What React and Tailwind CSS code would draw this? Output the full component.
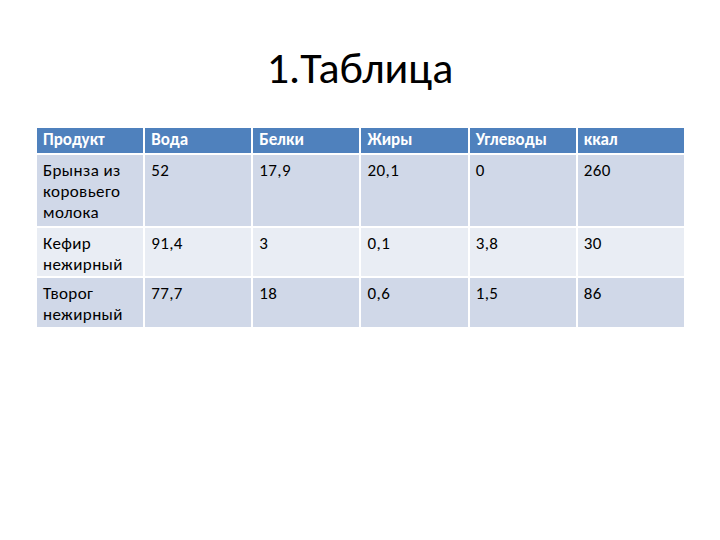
import React from "react";

const head = ["Продукт", "Вода", "Белки", "Жиры", "Углеводы", "ккал"];

const rows = [
  { h: "h-[71px]", bg: "bg-[#d0d8e8]", cells: ["Брынза из коровьего молока", "52", "17,9", "20,1", "0", "260"] },
  { h: "h-[48px]", bg: "bg-[#e9edf4]", cells: ["Кефир нежирный", "91,4", "3", "0,1", "3,8", "30"] },
  { h: "h-[49px]", bg: "bg-[#d0d8e8]", cells: ["Творог нежирный", "77,7", "18", "0,6", "1,5", "86"] },
];

export default function App() {
  return (
    <div className="w-[720px] h-[540px] bg-white font-['Carlito','Lato',sans-serif] text-black">
      <h1 className="pt-[40px] text-center text-[44px] leading-[56px]">1.Таблица</h1>
      <div className="ml-[37px] mt-[32px] w-[647px] grid grid-cols-6 gap-[2px] bg-white">
        {head.map((t) => (
          <div key={t} className="h-[25px] bg-[#4f81bd] px-[6px] pt-[1px] text-[17px] leading-[22px] font-bold text-white">
            {t}
          </div>
        ))}
        {rows.map((r) =>
          r.cells.map((c, i) => (
            <div key={r.cells[0] + i} className={`${r.h} ${r.bg} px-[6px] pt-[5px] text-[17px] leading-[21px] tracking-[0.4px]`}>
              {c}
            </div>
          ))
        )}
      </div>
    </div>
  );
}
